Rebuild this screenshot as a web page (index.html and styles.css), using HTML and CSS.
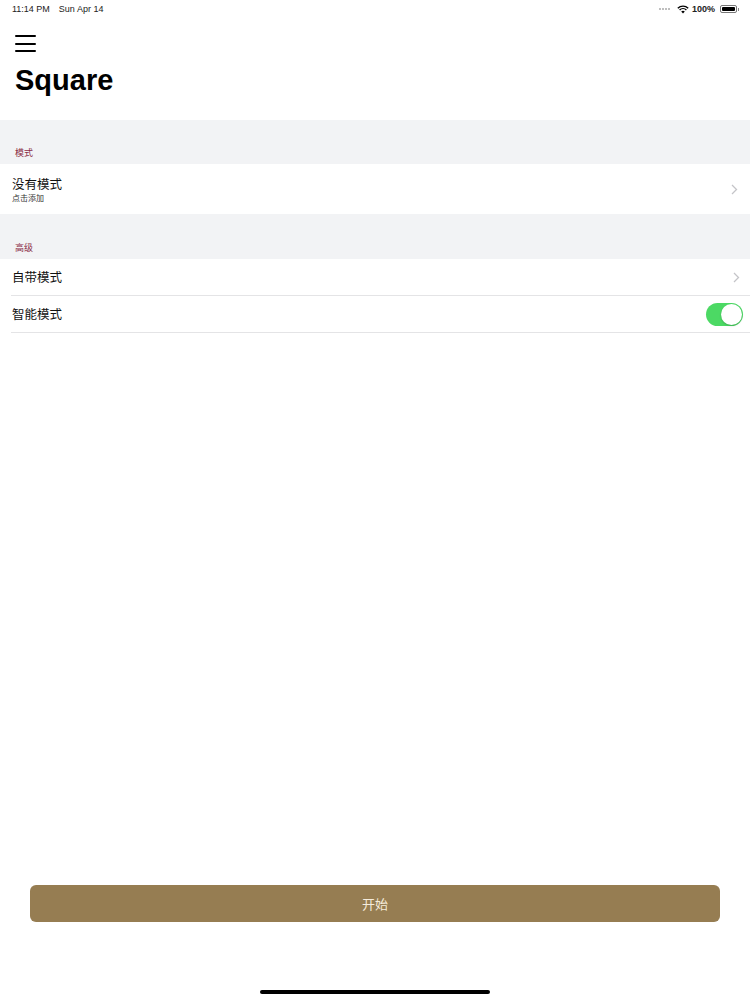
FILE: index.html
```html
<!DOCTYPE html>
<html lang="zh">
<head>
<meta charset="utf-8">
<link rel="stylesheet" href="styles.css">
</head>
<body>
<div class="screen">
  <div class="status">
    <div class="status-left"><span>11:14 PM</span><span>Sun Apr 14</span></div>
    <div class="status-right">
      <span class="dots"><i></i><i></i><i></i><i></i></span>
      <svg class="wifi" width="12" height="9" viewBox="0 0 12 9"><path d="M6 8.6 L4.2 6.6 A2.6 2.6 0 0 1 7.8 6.6 Z" fill="#000"/><path d="M2.6 5 A4.9 4.9 0 0 1 9.4 5" stroke="#000" stroke-width="1.4" fill="none"/><path d="M0.8 3.2 A7.5 7.5 0 0 1 11.2 3.2" stroke="#000" stroke-width="1.4" fill="none"/></svg>
      <span class="pct">100%</span>
      <span class="battery"><span class="fill"></span></span><span class="nub"></span>
    </div>
  </div>
  <div class="nav">
    <div class="burger"><i></i><i></i><i></i></div>
    <h1 class="title">Square</h1>
  </div>
  <div class="content">
    <div class="sec-head first">模式</div>
    <div class="row row-tall">
      <div class="row-text">
        <div class="row-title">没有模式</div>
        <div class="row-sub">点击添加</div>
      </div>
      <svg class="chev" width="7" height="11" viewBox="0 0 7 11"><path d="M1 1 L5.5 5.5 L1 10" stroke="#c4c4c8" stroke-width="1.3" fill="none"/></svg>
    </div>
    <div class="sec-head">高级</div>
    <div class="row row-line">
      <div class="row-title">自带模式</div>
      <svg class="chev" width="7" height="11" viewBox="0 0 7 11"><path d="M1 1 L5.5 5.5 L1 10" stroke="#c4c4c8" stroke-width="1.3" fill="none"/></svg>
    </div>
    <div class="row row-line">
      <div class="row-title">智能模式</div>
      <div class="toggle"><span class="knob"></span></div>
    </div>
    <div class="spacer"></div>
    <div class="btn-wrap"><button class="start">开始</button></div>
    <div class="home-wrap"><div class="home"></div></div>
  </div>
</div>
</body>
</html>
```
FILE: styles.css
```css
* { box-sizing: border-box; }
html, body { margin: 0; padding: 0; background: #fff; }
body { font-family: "Liberation Sans", "Noto Sans CJK SC", sans-serif; color: #000; }
.screen { width: 750px; height: 1000px; display: flex; flex-direction: column; overflow: hidden; }
.status { height: 18px; display: flex; justify-content: space-between; align-items: center; padding: 0 11px 0 12px; font-size: 9px; color: #222; }
.status-left { display: flex; gap: 9px; }
.status-right { display: flex; align-items: center; gap: 3px; }
.dots { display: flex; gap: 1px; margin-right: 4px; }
.dots i { width: 2px; height: 2px; border-radius: 50%; background: #aaa; display: block; }
.wifi { display: block; }
.pct { font-weight: bold; font-size: 9px; }
.battery { width: 17px; height: 8px; border: 1px solid #777; border-radius: 2px; padding: 1px; display: block; margin-left: 2px; }
.battery .fill { display: block; width: 100%; height: 100%; background: #000; border-radius: 1px; }
.nub { width: 1px; height: 3px; background: #888; display: block; margin-left: -2px; }
.nav { height: 102px; padding: 17px 0 0 15px; }
.burger { width: 21px; height: 17px; display: flex; flex-direction: column; justify-content: space-between; }
.burger i { display: block; height: 2px; background: #000; border-radius: 1px; }
.title { margin: 11px 0 0 0; font-size: 29px; font-weight: bold; line-height: 34px; }
.content { flex: 1; display: flex; flex-direction: column; }
.sec-head { background: #f2f3f5; height: 45px; padding: 0 0 5px 15px; display: flex; align-items: flex-end; font-size: 9px; color: #8a2b45; font-family: "Noto Sans CJK SC", sans-serif; }
.sec-head.first { height: 44px; }
.row { display: flex; align-items: center; justify-content: space-between; padding: 0 9px 0 12px; font-family: "Noto Sans CJK SC", sans-serif; }
.row-tall { height: 50px; }
.row-text { display: flex; flex-direction: column; }
.row-title { font-size: 12.5px; line-height: 16px; color: #111; }
.row-sub { font-size: 8px; line-height: 11px; color: #333; margin-top: 0; }
.row-line { height: 37px; margin-left: 11px; padding-left: 1px; padding-right: 7px; border-bottom: 1px solid #e4e4e6; }
.chev { display: block; margin-right: 3px; }
.toggle { width: 37px; height: 23px; border-radius: 12px; background: #4cd964; position: relative; }
.toggle .knob { position: absolute; right: 1px; top: 1px; width: 21px; height: 21px; border-radius: 50%; background: #fff; box-shadow: 0 1px 2px rgba(0,0,0,0.2); }
.spacer { flex: 1; }
.btn-wrap { padding: 0 30px; }
.start { width: 100%; height: 37px; border: none; border-radius: 6px; background: #967d52; color: #f5ecdc; font-size: 13px; font-family: "Noto Sans CJK SC", sans-serif; }
.home-wrap { height: 78px; display: flex; justify-content: center; align-items: flex-end; padding-bottom: 6px; }
.home { width: 230px; height: 4px; border-radius: 2px; background: #000; }
```
